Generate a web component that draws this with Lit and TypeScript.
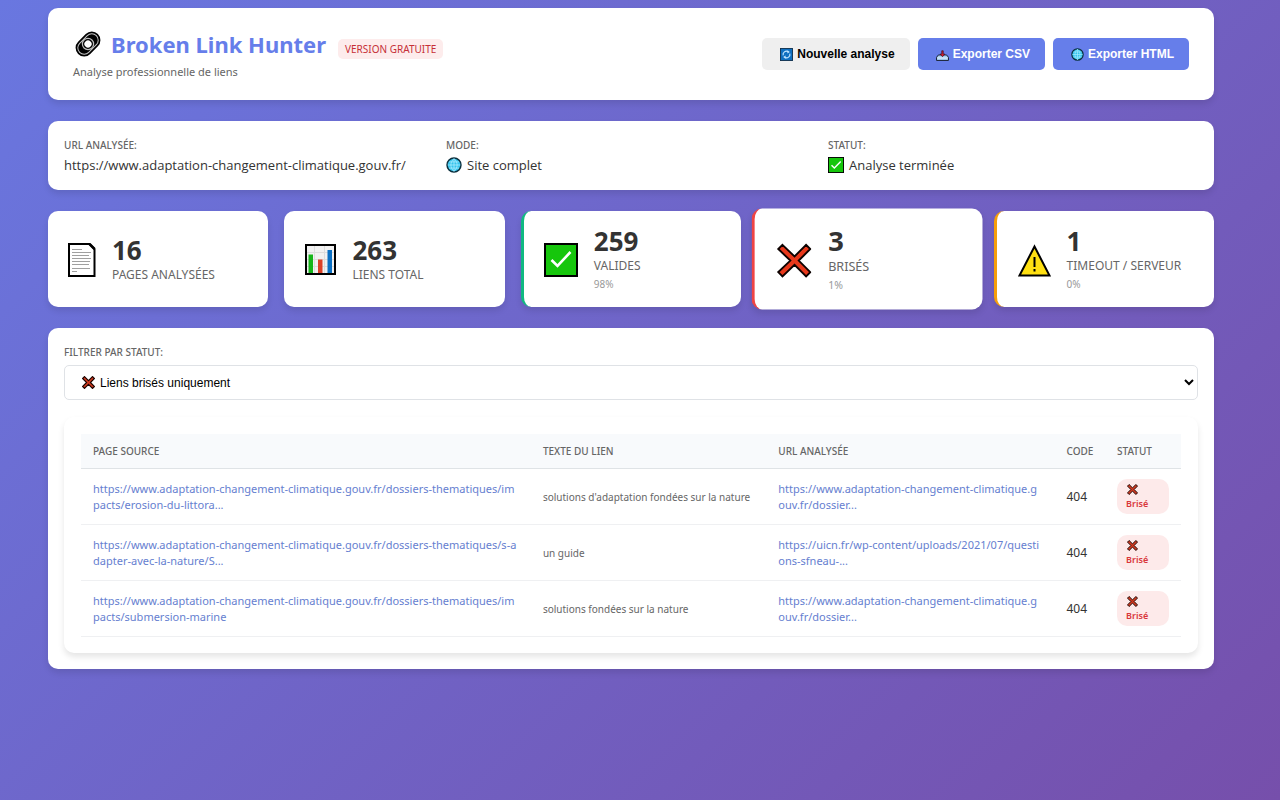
import { LitElement, html, css, svg } from "lit";
import { customElement, state } from "lit/decorators.js";

const icons = {
  link: svg`<svg class="ico-link" viewBox="0 0 30 30" aria-hidden="true">
    <g transform="rotate(-45 15 15)" fill="none">
      <rect x="1" y="6.4" width="28" height="17.2" rx="8.6" fill="#000"/>
      <rect x="3.2" y="8.6" width="23.6" height="12.8" rx="6.4" stroke="#c8c8c8" stroke-width="1"/>
      <circle cx="15" cy="15" r="5.6" stroke="#bdbdbd" stroke-width="1.2" fill="#000"/>
      <circle cx="15" cy="15" r="3.6" fill="#fff"/>
    </g></svg>`,
  refresh: svg`<svg class="ico-sm" viewBox="0 0 14 14" aria-hidden="true">
    <rect x=".5" y=".5" width="13" height="13" fill="#0f6fc0" stroke="#12324f"/>
    <path d="M3.4 8A3.7 3.7 0 0 1 8.800 3.900M10.600 6A3.700 3.700 0 0 1 5.200 10.100" fill="none" stroke="#bfe4ff" stroke-width="1.300"/>
    <path d="M8 2.300 10.600 4.300 8 5.900zM6 11.700 3.400 9.700 6 8.100z" fill="#bfe4ff"/></svg>`,
  inbox: svg`<svg class="ico-sm" viewBox="0 0 14 14" aria-hidden="true">
    <path d="M2.6 7.500h8.800l2 2.500V13.400H.6V10z" fill="#a9cff0" stroke="#101828" stroke-width="1"/>
    <path d="M1.500 10.800h11" stroke="#e8f4ff" stroke-width="1"/>
    <path d="M6.200 3h1.600v3.500h1.800L7 9.400 4.400 6.500h1.800z" fill="#d3202f" stroke="#3b0a18" stroke-width=".7"/></svg>`,
  globe: svg`<svg class="ico-sm" viewBox="0 0 14 14" aria-hidden="true">
    <circle cx="7" cy="7" r="6.100" fill="#35c3ec" stroke="#0b2f3d" stroke-width="1.300"/>
    <path d="M7 1.500v11M1.500 7h11M2.500 4.300h9M2.500 9.700h9M7 1.500C3.400 4.500 3.400 9.500 7 12.500M7 1.500c3.600 3 3.600 8 0 11" fill="none" stroke="#a8ecff" stroke-width=".7"/></svg>`,
  check: svg`<svg class="ico-sm" viewBox="0 0 34 34" aria-hidden="true">
    <rect x="1" y="1" width="32" height="32" fill="#16c60c" stroke="#000" stroke-width="2"/>
    <path d="M7.500 17.500l6 6L27 9.500" fill="none" stroke="#fff" stroke-width="3"/></svg>`,
  cross: svg`<svg class="ico-x" viewBox="0 0 34 34" aria-hidden="true">
    <path d="M6.500 1.500 17 12 27.500 1.500l5 5L22 17l10.500 10.500-5 5L17 22 6.500 32.500l-5-5L12 17 1.500 6.500z" fill="#d23a20" stroke="#1c0502" stroke-width="3"/></svg>`,
};

const statIcons = {
  page: svg`<svg class="si w32" viewBox="0 0 32 36" aria-hidden="true">
    <path d="M5 3h20.500l5 5V35H5z" fill="#fff" stroke="#000" stroke-width="2"/>
    <path d="M25.500 3 30.500 8" fill="none" stroke="#000" stroke-width="2.500"/>
    <path d="M8 8.500h10M8 11.500h19M8 14.500h17M8 17.500h19M8 20.500h18M8 23.500h17M8 27.500h18M8 30.500h5" stroke="#a0a0a0" stroke-width="1"/></svg>`,
  chart: svg`<svg class="si w36" viewBox="0 0 36 36" aria-hidden="true">
    <rect x="6" y="4" width="29" height="29" fill="#f1f1f1" stroke="#000" stroke-width="2"/>
    <path d="M7 11.500h27M7 18.500h27M7 25.500h27M14.500 5v27M24.500 5v27" stroke="#dcdcdc"/>
    <path d="M8.500 13.500h4.500V32H8.500z" fill="#16b51a"/><path d="M18 18.500h4.500V32H18z" fill="#dc4128"/><path d="M27.500 9h4.500v23H27.500z" fill="#0b70c4"/></svg>`,
  check: svg`<svg class="si w38" viewBox="0 0 38 36" aria-hidden="true">
    <rect x="5" y="3" width="32" height="32" fill="#16c60c" stroke="#000" stroke-width="2"/>
    <path d="M11.500 19l6 6L30.500 11" fill="none" stroke="#fff" stroke-width="2.600"/></svg>`,
  cross: svg`<svg class="si w38" viewBox="0 0 38 36" aria-hidden="true">
    <path d="M10.500 4.500 22 15.500 33 4.500l4 4L26 19.500l11 11-4 4L22 23.500 10.500 34.500l-4-4L18 19.500 6.500 8.500z" fill="#e8391c" stroke="#0c0201" stroke-width="1.800"/></svg>`,
  warn: svg`<svg class="si w38" viewBox="0 0 38 36" aria-hidden="true">
    <path d="M21.500 5.500 36.500 34.500h-30z" fill="#ffe012" stroke="#000" stroke-width="2"/>
    <path d="M21.500 16v10M21.500 28v2.600" stroke="#000" stroke-width="2"/></svg>`,
};

const base = "https://www.adaptation-changement-climatique.gouv.fr/";

@customElement("app-root")
export class AppRoot extends LitElement {
  @state() private stats = [
    { icon: statIcons.page, value: "16", label: "Pages analysées", pct: "", kind: "" },
    { icon: statIcons.chart, value: "263", label: "Liens total", pct: "", kind: "" },
    { icon: statIcons.check, value: "259", label: "Valides", pct: "98%", kind: "ok" },
    { icon: statIcons.cross, value: "3", label: "Brisés", pct: "1%", kind: "bad" },
    { icon: statIcons.warn, value: "1", label: "Timeout / Serveur", pct: "0%", kind: "slow" },
  ];

  @state() private rows = [
    { src: base + "dossiers-thematiques/impacts/erosion-du-littora...", text: "solutions d'adaptation fondées sur la nature", url: base + "dossier..." },
    { src: base + "dossiers-thematiques/s-adapter-avec-la-nature/S...", text: "un guide", url: "https://uicn.fr/wp-content/uploads/2021/07/questions-sfneau-..." },
    { src: base + "dossiers-thematiques/impacts/submersion-marine", text: "solutions fondées sur la nature", url: base + "dossier..." },
  ];

  static styles = css`
    :host { display: block; min-height: 100vh; box-sizing: border-box; padding: 8px 66px 24px 48px;
      background: linear-gradient(135deg, #6977e0 0%, #764fab 100%);
      font-family: "Segoe UI", "Noto Sans", sans-serif; font-size: 13px; line-height: 20px; color: #333; }
    * { box-sizing: border-box; }
    svg { flex: none; }
    main { display: flex; flex-direction: column; gap: 21px; }
    .card { background: #fff; border-radius: 10px; box-shadow: 0 4px 6px rgba(0, 0, 0, .1); }
    .head { display: flex; justify-content: space-between; align-items: center; padding: 18px 25px; gap: 16px; }
    .brand { display: flex; align-items: center; }
    h1 { margin: 0 12px 0 0; display: flex; align-items: center; gap: 8px; font-size: 22px; line-height: 36px; color: #667eea; }
    .ico-link { width: 30px; height: 30px; }
    .info dd { font-family: "Segoe UI", "Open Sans", sans-serif; }
    .tag { background: #fdecec; color: #c62f36; border-radius: 5px; font-size: 10px; line-height: 20px; padding: 0 7px; text-transform: uppercase; margin-top: 10px; }
    .sub { margin: 0; color: #666; font-size: 11px; line-height: 20px; }
    .actions { display: flex; gap: 8px; }
    button { display: flex; align-items: center; gap: 4px; height: 32px; border: 0; border-radius: 5px; padding: 0 15px 0 18px;
      font: bold 12px "Liberation Sans", Arial, sans-serif; background: #efefef; color: #000; cursor: pointer; }
    button.primary { background: #667eea; color: #fff; }
    .ico-sm { width: 13px; height: 13px; }
    .info { display: grid; grid-template-columns: repeat(3, 1fr); gap: 12px; padding: 15px 16px; margin: 0; }
    .info dt, .flabel, th { font-size: 10px; font-weight: 500; text-transform: uppercase; color: #666; }
    .info dt { line-height: 19px; }
    .info dd { margin: 0; display: flex; align-items: center; gap: 5px; font-size: 13px; line-height: 20px; }
    .info .ico-sm { width: 16px; height: 16px; }
    .stats { display: grid; grid-template-columns: repeat(5, 1fr); gap: 16px; }
    .stat { display: flex; align-items: center; gap: 16px; height: 96px; padding: 0 16px; }
    .ok { border-left: 3px solid #10b981; }
    .bad { border-left: 3px solid #ef4444; transform: scale(1.05); }
    .slow { border-left: 3px solid #f59e0b; }
    .si { height: 36px; }
    .w32 { width: 32px; } .w36 { width: 36px; } .w38 { width: 38px; }
    .num { font-size: 26px; line-height: 32px; font-weight: 700; }
    .lab { font-size: 12px; line-height: 18px; color: #666; text-transform: uppercase; white-space: nowrap; }
    .pct { font-size: 10px; line-height: 18px; color: #999; }
    .results { padding: 16px; }
    .flabel { display: block; line-height: 17px; margin-bottom: 4px; }
    .pick { position: relative; }
    select { display: block; width: 100%; height: 35px; border: 1px solid #dfe2e6; border-radius: 5px; background: #fff;
      font: 12px "Liberation Sans", Arial, sans-serif; color: #000; padding: 0 2px 0 31px; }
    .pick .ico-x { position: absolute; left: 18px; top: 11px; width: 13px; height: 13px; pointer-events: none; }
    .panel { margin-top: 17px; padding: 17px 17px 16px; }
    table { width: 100%; table-layout: fixed; border-collapse: collapse; }
    .c1 { width: 40.9%; } .c2 { width: 21.4%; } .c3 { width: 26.2%; } .c4 { width: 4.6%; } .c5 { width: 6.9%; }
    th { text-align: left; background: #f8fafc; line-height: 34px; padding: 0 0 0 12px; border-bottom: 1px solid #dfe3e6; }
    td { padding: 10px 12px; border-bottom: 1px solid #eff0f2; vertical-align: middle; line-height: 16px; font-size: 11px; color: #666; }
    td.txt { font-size: 10px; }
    td.code { font-size: 12px; color: #333; }
    td a { color: #6680d0; text-decoration: none; word-break: break-all; }
    .badge { display: block; background: #fdeaea; border-radius: 10px; height: 35px; padding: 4px 9px; color: #d9363a; font-size: 9px; font-weight: 600; line-height: 14px; }
    .badge .ico-x { display: block; width: 11px; height: 11px; margin: 1px 0 2px 1px; }
  `;

  render() {
    return html`<main>
      <header class="card head">
        <div>
          <div class="brand"><h1>${icons.link}Broken Link Hunter</h1><span class="tag">Version gratuite</span></div>
          <p class="sub">Analyse professionnelle de liens</p>
        </div>
        <div class="actions">
          <button>${icons.refresh}Nouvelle analyse</button>
          <button class="primary">${icons.inbox}Exporter CSV</button>
          <button class="primary">${icons.globe}Exporter HTML</button>
        </div>
      </header>
      <dl class="card info">
        <div><dt>URL analysée:</dt><dd>${base}</dd></div>
        <div><dt>Mode:</dt><dd>${icons.globe}Site complet</dd></div>
        <div><dt>Statut:</dt><dd>${icons.check}Analyse terminée</dd></div>
      </dl>
      <section class="stats">
        ${this.stats.map((s) => html`<article class="card stat ${s.kind}">${s.icon}
          <div><div class="num">${s.value}</div><div class="lab">${s.label}</div>${s.pct ? html`<div class="pct">${s.pct}</div>` : ""}</div>
        </article>`)}
      </section>
      <section class="card results">
        <label class="flabel" for="status">Filtrer par statut:</label>
        <div class="pick"><select id="status"><option>Liens brisés uniquement</option></select>${icons.cross}</div>
        <div class="card panel">
          <table>
            <colgroup><col class="c1"><col class="c2"><col class="c3"><col class="c4"><col class="c5"></colgroup>
            <thead><tr><th>Page source</th><th>Texte du lien</th><th>URL analysée</th><th>Code</th><th>Statut</th></tr></thead>
            <tbody>${this.rows.map((r) => html`<tr>
              <td><a href="#">${r.src}</a></td><td class="txt">${r.text}</td>
              <td><a href="#">${r.url}</a></td><td class="code">404</td>
              <td><span class="badge">${icons.cross}Brisé</span></td></tr>`)}</tbody>
          </table>
        </div>
      </section>
    </main>`;
  }
}
